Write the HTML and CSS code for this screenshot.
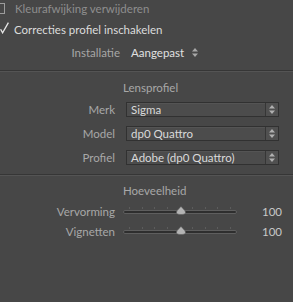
FILE: index.html
```html
<!DOCTYPE html>
<html>
<head>
<meta charset="utf-8">
<link rel="stylesheet" href="styles.css">
</head>
<body>
<div class="panel">
  <div class="check-row row1">
    <span class="box"></span>
    <span class="check-label dim">Kleurafwijking verwijderen</span>
  </div>
  <div class="check-row row2">
    <span class="tick"><svg width="9" height="12" viewBox="0 0 9 12"><path d="M0.6 7.2 L2.6 10.8 L8.4 0.6" fill="none" stroke="#e6e6e6" stroke-width="1.3"/></svg></span>
    <span class="check-label bright">Correcties profiel inschakelen</span>
  </div>
  <div class="setup-row">
    <span class="setup-label">Installatie</span>
    <span class="setup-value">Aangepast</span>
    <svg class="updown" width="6" height="9" viewBox="0 0 6 9"><path d="M3 0 L6 3.5 L0 3.5Z M3 9 L6 5.5 L0 5.5Z" fill="#a8a8a8"/></svg>
  </div>
  <div class="sep sep1"></div>
  <div class="header h1">Lensprofiel</div>
  <div class="selects">
    <div class="field">
      <span class="label">Merk</span>
      <div class="select"><span class="select-text">Sigma</span><span class="arrow"><svg width="6" height="9" viewBox="0 0 6 9"><path d="M3 0 L6 3.5 L0 3.5Z M3 9 L6 5.5 L0 5.5Z" fill="#b0b0b0"/></svg></span></div>
    </div>
    <div class="field">
      <span class="label">Model</span>
      <div class="select"><span class="select-text">dp0 Quattro</span><span class="arrow"><svg width="6" height="9" viewBox="0 0 6 9"><path d="M3 0 L6 3.5 L0 3.5Z M3 9 L6 5.5 L0 5.5Z" fill="#b0b0b0"/></svg></span></div>
    </div>
    <div class="field">
      <span class="label">Profiel</span>
      <div class="select"><span class="select-text">Adobe (dp0 Quattro)</span><span class="arrow"><svg width="6" height="9" viewBox="0 0 6 9"><path d="M3 0 L6 3.5 L0 3.5Z M3 9 L6 5.5 L0 5.5Z" fill="#b0b0b0"/></svg></span></div>
    </div>
  </div>
  <div class="sep sep2"></div>
  <div class="header h2">Hoeveelheid</div>
  <div class="sliders">
    <div class="slider-row">
      <span class="label">Vervorming</span>
      <div class="slider">
        <div class="ticks"><i></i><i></i><i></i><i></i><i></i><i></i><i></i><i></i><i></i></div>
        <div class="track"></div>
        <div class="thumb"><svg width="10" height="9" viewBox="0 0 10 9"><path d="M5 0.5 C6 2 9.5 4 9.5 6.5 C9.5 8 8 8.5 5 8.5 C2 8.5 0.5 8 0.5 6.5 C0.5 4 4 2 5 0.5Z" fill="#b4b4b4" stroke="#5a5a5a" stroke-width="0.6"/></svg></div>
      </div>
      <span class="value">100</span>
    </div>
    <div class="slider-row">
      <span class="label">Vignetten</span>
      <div class="slider">
        <div class="ticks"><i></i><i></i><i></i><i></i><i></i><i></i><i></i><i></i><i></i></div>
        <div class="track"></div>
        <div class="thumb"><svg width="10" height="9" viewBox="0 0 10 9"><path d="M5 0.5 C6 2 9.5 4 9.5 6.5 C9.5 8 8 8.5 5 8.5 C2 8.5 0.5 8 0.5 6.5 C0.5 4 4 2 5 0.5Z" fill="#b4b4b4" stroke="#5a5a5a" stroke-width="0.6"/></svg></div>
      </div>
      <span class="value">100</span>
    </div>
  </div>
</div>
</body>
</html>
```

FILE: styles.css
```css
html, body {
  margin: 0;
  padding: 0;
}
body {
  background: #474747;
  width: 293px;
  height: 302px;
  overflow: hidden;
  font-family: Lato, "Liberation Sans", sans-serif;
  font-size: 11.5px;
  color: #d8d8d8;
}
.panel {
  display: flex;
  flex-direction: column;
}
.check-row {
  display: flex;
  align-items: center;
}
.row1 { height: 16px; }
.row2 { height: 26px; }
.box {
  width: 9px;
  height: 9px;
  border: 1px solid #9c9c9c;
  margin-left: -6px;
  margin-right: 10px;
  flex: none;
}
.tick {
  display: flex;
  width: 9px;
  margin-left: 0;
  margin-right: 5px;
  margin-top: -2px;
}
.dim { color: #8e8e8e; }
.bright { color: #dcdcdc; }
.setup-row {
  height: 20px;
  display: flex;
  align-items: center;
}
.setup-label {
  width: 120px;
  text-align: right;
  color: #a6a6a6;
  margin-right: 11px;
}
.setup-value {
  color: #e0e0e0;
  margin-right: 8px;
}
.sep {
  height: 0;
  border-top: 1px solid #363636;
  border-bottom: 1px solid #545454;
}
.sep1 { margin-top: 8px; }
.sep2 { margin-top: 9px; }
.header {
  height: 16px;
  line-height: 16px;
  padding-left: 123px;
  color: #a8a8a8;
}
.h1 { margin-top: 8px; }
.h2 { margin-top: 7px; }
.selects {
  display: flex;
  flex-direction: column;
  gap: 9px;
  margin-top: 6px;
}
.field {
  display: flex;
  align-items: center;
  height: 15px;
}
.label {
  width: 115px;
  text-align: right;
  color: #a8a8a8;
  flex: none;
}
.select {
  margin-left: 11px;
  width: 151px;
  height: 13px;
  border: 1px solid #313131;
  background: #4c4c4c;
  display: flex;
  align-items: center;
  box-shadow: inset 0 1px 0 #545454;
}
.select-text {
  flex: 1;
  padding-left: 4px;
  color: #dadada;
  line-height: 13px;
}
.arrow {
  width: 12px;
  height: 13px;
  border-left: 1px solid #363636;
  display: flex;
  align-items: center;
  justify-content: center;
  background: #505050;
}
.sliders {
  display: flex;
  flex-direction: column;
  margin-top: 2px;
}
.slider-row {
  height: 20px;
  display: flex;
  align-items: center;
}
.slider {
  position: relative;
  margin-left: 8px;
  width: 114px;
  height: 20px;
}
.track {
  position: absolute;
  left: 0;
  right: 0;
  top: 9px;
  height: 2px;
  background: #2e2e2e;
  border: 1px solid #5e5e5e;
  border-radius: 2px;
}
.ticks {
  position: absolute;
  left: 6px;
  right: 6px;
  top: 6px;
  height: 2px;
  display: flex;
  justify-content: space-between;
}
.ticks i {
  width: 1px;
  height: 2px;
  background: #5c5c5c;
}
.thumb {
  position: absolute;
  left: 53px;
  top: 5px;
  display: flex;
}
.value {
  width: 45px;
  text-align: right;
  color: #c8c8c8;
}
```
